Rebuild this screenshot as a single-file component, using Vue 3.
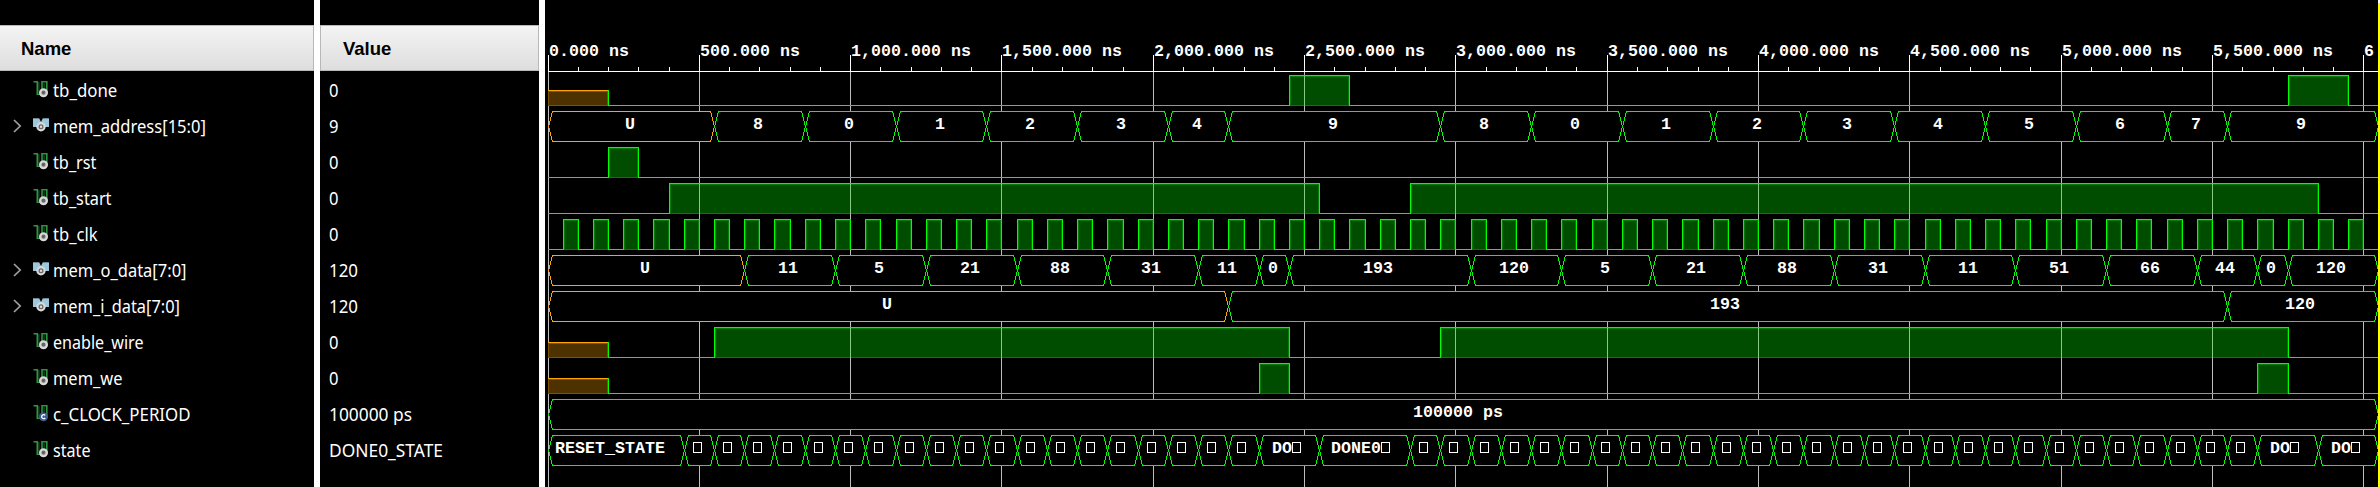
<script setup>
const X0 = 548
const END = 2378
const px = (t) => (t === Infinity ? END : X0 + Math.floor(t * 0.30264))

const majors = Array.from({ length: 13 }, (_, i) => i * 500)
const minors = Array.from({ length: 61 }, (_, i) => i * 100).filter((t) => t % 500)
// the last major tick only has room for its first digit
const timeLabel = (t) => (t === 6000 ? '6' : t.toLocaleString('en-US') + '.000 ns')

const bus = (starts, labels) =>
  starts.map((s, i) => ({ a: px(s), b: px(starts[i + 1] ?? Infinity), label: labels[i] }))

const clock = Array.from({ length: 60 }, (_, i) => [i * 100 + 50, i * 100 + 100])

// "~" marks a label that was truncated and ends in an empty box
const stateStarts = [0]
const stateLabels = ['RESET_STATE']
const addState = (t, l) => { stateStarts.push(t); stateLabels.push(l) }
for (let t = 450; t < 2350; t += 100) addState(t, '~')
addState(2350, 'DO~')
addState(2550, 'DONE0~')
for (let t = 2850; t < 5650; t += 100) addState(t, '~')
addState(5650, 'DO~')
addState(5850, 'DO~')

const signals = [
  { name: 'tb_done', w: 64.3, value: '0', vw: 9.5, undef: 200, high: [[2450, 2650], [5750, 5950]] },
  { name: 'mem_address[15:0]', w: 153, value: '9', vw: 9.5, vector: true,
    bus: bus([0, 550, 850, 1150, 1450, 1750, 2050, 2250, 2950, 3250, 3550, 3850, 4150, 4450, 4750, 5050, 5350, 5550],
      'U 8 0 1 2 3 4 9 8 0 1 2 3 4 5 6 7 9'.split(' ')) },
  { name: 'tb_rst', w: 43.5, value: '0', vw: 9.5, high: [[200, 300]] },
  { name: 'tb_start', w: 58.5, value: '0', vw: 9.5, high: [[400, 2550], [2850, 5850]] },
  { name: 'tb_clk', w: 44.5, value: '0', vw: 9.5, high: clock },
  { name: 'mem_o_data[7:0]', w: 133.5, value: '120', vw: 29, vector: true,
    bus: bus([0, 650, 950, 1250, 1550, 1850, 2150, 2350, 2450, 3050, 3350, 3650, 3950, 4250, 4550, 4850, 5150, 5450, 5650, 5750],
      'U 11 5 21 88 31 11 0 193 120 5 21 88 31 11 51 66 44 0 120'.split(' ')) },
  { name: 'mem_i_data[7:0]', w: 127, value: '120', vw: 29, vector: true, bus: bus([0, 2250, 5550], ['U', '193', '120']) },
  { name: 'enable_wire', w: 90.5, value: '0', vw: 9.5, undef: 200, high: [[550, 2450], [2950, 5750]] },
  { name: 'mem_we', w: 69.5, value: '0', vw: 9.5, undef: 200, high: [[2350, 2450], [5650, 5750]] },
  { name: 'c_CLOCK_PERIOD', w: 137.5, value: '100000 ps', vw: 83, constant: true, bus: bus([0], ['100000 ps']) },
  { name: 'state', w: 37.5, value: 'DONE0_STATE', vw: 114, bus: bus(stateStarts, stateLabels) },
]

signals.forEach((s, i) => {
  s.top = 75 + 36 * i
  s.low = s.top + 30
  if (!s.bus) {
    s.boxes = s.high.map(([a, b]) => ({ a: px(a), b: px(b) }))
    const start = s.undef ? px(s.undef) : X0
    let d = s.undef ? `M${start + 0.5} ${s.top + 15}V${s.low + 0.5}` : `M${X0} ${s.low + 0.5}`
    s.boxes.forEach(({ a, b }) => {
      d += `H${a + 0.5}V${s.top + 0.5}H${b + 0.5}V${s.low + 0.5}`
    })
    s.path = d + `H${END}`
  } else {
    s.bus.forEach((c) => {
      const t = s.top + 0.5
      const l = s.low + 0.5
      const m = (t + l) / 2
      const a = c.a + 0.5
      const b = c.b + 0.5
      c.path = `M${a} ${m}L${a + 4} ${t}H${b - 4}L${b} ${m}L${b - 4} ${l}H${a + 4}Z`
      const n = c.label.length
      c.tx = Math.floor((c.a + c.b) / 2 - n * 5.5 - 0.5)
      c.text = c.label.replace('~', '')
      c.boxX = c.label.endsWith('~') ? c.tx + (n - 1) * 10 + 0.5 : null
    })
  }
})
</script>

<template>
  <div class="viewer">
    <section class="column names">
      <header class="head">Name</header>
      <div v-for="s in signals" :key="s.name" class="row">
        <span class="expander">
          <svg v-if="s.vector" width="9" height="14" viewBox="0 0 9 14"><path d="M1 1L7.2 7L1 13" fill="none" stroke="#a0a0a0" stroke-width="1.7" /></svg>
        </span>
        <svg class="icon" :class="{ low: s.vector }" width="17" height="18" viewBox="0 0 17 18">
          <template v-if="s.vector">
            <path d="M0 1H6L8 5L10 1H16V10H12L8 7L4 10H0Z" fill="#9cc8df" />
            <path d="M0 1.5H6M10 1.5H16" stroke="#6d8792" />
            <circle cx="8" cy="9.8" r="3.6" fill="#666" stroke="#d8d8d8" stroke-width="2.2" />
            <circle cx="8" cy="9.8" r="1.2" fill="#ddd" />
          </template>
          <template v-else>
            <path d="M5.8 2V13M11.2 3V8" stroke="#123c1a" stroke-width="1.8" />
            <path d="M0.5 1.7H4.3V14.3H9V1.7H13.8V14" fill="none" stroke="#2f9443" stroke-width="1.6" />
            <circle v-if="s.constant" cx="10.5" cy="12.7" r="4.5" fill="#3d5a94" />
            <path v-if="s.constant" d="M12.2 11.4A2 2 0 1 0 12.2 14" fill="none" stroke="#fff" stroke-width="1.3" />
            <circle v-if="!s.constant" cx="10.5" cy="12.7" r="3.3" fill="#666" stroke="#d8d8d8" stroke-width="2.4" />
          </template>
        </svg>
        <svg class="label" width="250" height="36"><text x="0" y="26" :textLength="s.w" lengthAdjust="spacingAndGlyphs">{{ s.name }}</text></svg>
      </div>
    </section>
    <div class="divider"></div>
    <section class="column values">
      <header class="head">Value</header>
      <div v-for="s in signals" :key="s.name" class="row">
        <svg class="label" width="200" height="36"><text x="0" y="26" :textLength="s.vw" lengthAdjust="spacingAndGlyphs">{{ s.value }}</text></svg>
      </div>
    </section>
    <div class="divider"></div>
    <section class="wave">
      <svg width="1835" height="487" viewBox="545 0 1835 487" shape-rendering="crispEdges">
        <rect v-for="t in majors" :key="t" :x="px(t)" y="72" width="1" height="415" fill="#bdbdbd" />
        <rect x="548" y="71" width="1830" height="1" fill="#fff" />
        <rect v-for="t in majors" :key="t" :x="px(t)" y="55" width="1" height="17" fill="#fff" />
        <rect v-for="t in minors" :key="t" :x="px(t)" y="67" width="1" height="5" fill="#fff" />
        <text v-for="t in majors" :key="t" class="mono" :x="px(t) + 1" y="56">{{ timeLabel(t) }}</text>

        <g v-for="s in signals" :key="s.name">
          <template v-if="!s.bus">
            <template v-if="s.undef">
              <rect x="548" :y="s.top + 15" :width="px(s.undef) - 548" height="16" fill="#4d3200" />
              <rect x="548.5" :y="s.top + 15.5" :width="px(s.undef) - 549" height="15" fill="none" stroke="#805300" />
              <rect x="548" :y="s.top + 16" :width="px(s.undef) - 548" height="1" fill="#805300" />
              <rect x="548" :y="s.top + 15" :width="px(s.undef) - 548" height="1" fill="#ffa500" />
            </template>
            <path class="green" :d="s.path" />
            <g v-for="b in s.boxes" :key="b.a">
              <rect :x="b.a + 1" :y="s.top + 1" :width="b.b - b.a - 1" height="30" fill="#004d00" />
              <rect :x="b.a + 1.5" :y="s.top + 1.5" :width="b.b - b.a - 2" height="29" fill="none" stroke="#008000" />
              <rect v-for="t in majors.filter((m) => px(m) > b.a && px(m) < b.b)" :key="t" :x="px(t)" :y="s.top + 1" width="1" height="30" fill="#85c985" />
            </g>
          </template>
          <template v-else>
            <g v-for="c in s.bus" :key="c.a">
              <path class="green cell" :class="{ unknown: c.label === 'U' }" :d="c.path" />
              <text class="mono" :x="c.tx" :y="s.top + 18">{{ c.text }}</text>
              <rect v-if="c.boxX !== null" :x="c.boxX" :y="s.top + 7.5" width="8" height="10" fill="none" stroke="#fff" />
            </g>
          </template>
        </g>
        <rect x="2378" y="0" width="2" height="487" fill="#ff0" />
        <rect x="2378" y="0" width="2" height="3" fill="#fff" />
      </svg>
    </section>
  </div>
</template>

<style>
body { background: #000; overflow: hidden; }
</style>

<style scoped>
.viewer { display: flex; width: 2380px; height: 487px; background: #000; overflow: hidden; }
.column { flex: none; padding-top: 25px; box-sizing: border-box; }
.names { width: 314px; }
.values { width: 219px; }
.divider { flex: none; width: 6px; background: #fff; }
.head {
  box-sizing: border-box; height: 46px; padding-left: 21px;
  border: 1px solid #b8b8b8; border-left: 0; margin-bottom: 2px;
  background: linear-gradient(#f4f4f4, #dededf);
  font: bold 18.5px/45px "Liberation Sans", Arial, sans-serif; color: #000;
}
.values .head { border-left: 1px solid #b8b8b8; padding-left: 22px; }
.row { display: flex; height: 36px; align-items: center; }
.values .row { padding-left: 9px; }
.expander { display: flex; width: 20px; padding-left: 13px; margin-top: -3px; }
.icon { margin-top: -5px; }
.icon.low { margin-top: -2px; }
.label { display: block; margin-left: 3px; margin-top: -4px; overflow: visible; font: 18.5px "Noto Sans", "Open Sans", sans-serif; fill: #fff; }
.values .label { margin-left: 0; }
.wave { flex: none; width: 1835px; }
.wave svg { display: block; }
.mono { font: bold 16.667px "Liberation Mono", "Courier New", monospace; fill: #fff; white-space: pre; }
.green { fill: none; stroke: #0f0; stroke-width: 1; }
.cell { fill: #000; }
.unknown { stroke: #ffa500; }
</style>
